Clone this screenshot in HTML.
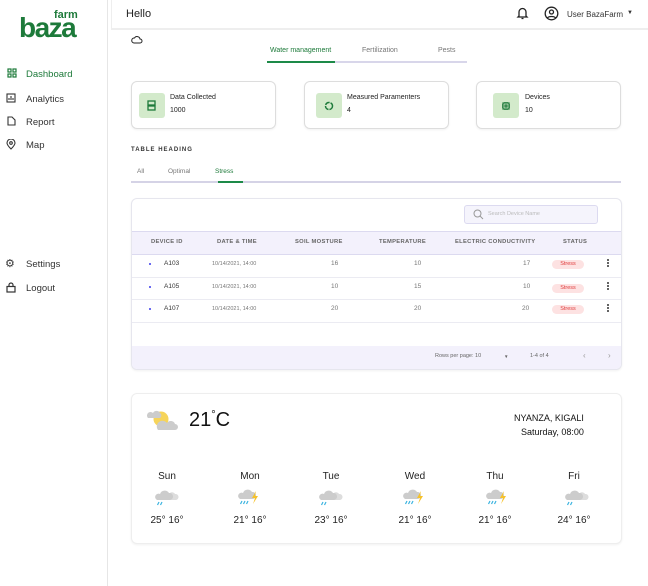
<!DOCTYPE html>
<html><head><meta charset="utf-8"><style>
*{box-sizing:border-box;margin:0;padding:0}
body{width:648px;height:586px;background:#fff;font-family:"Liberation Sans",sans-serif;position:relative;overflow:hidden;color:#222}
.a{position:absolute;white-space:nowrap}
.side{left:0;top:0;width:108px;height:586px;border-right:1px solid #e6e6e6}
.nav{font-size:9.5px;color:#333}
.card{border:1px solid #ddd;border-radius:6px;background:#fff;box-shadow:0 1px 2px rgba(0,0,0,.06)}
.ib{background:#d3eacb;border-radius:3px}
.t7{font-size:7px;color:#222}
.th{font-size:5.8px;color:#666;font-weight:bold;letter-spacing:.3px}
.td{font-size:6.5px;color:#777}
.pill{background:#fde2e2;color:#e03c3c;font-size:5.5px;border-radius:5px;width:32px;height:9px;line-height:9px;text-align:center}
.kb{width:2px;height:2px;background:#333;border-radius:1px;left:607px}
.day{font-size:10px;color:#222;text-align:center;width:60px}
</style></head><body>
<div class="a side"></div>
<div class="a" style="left:19px;top:14px;font-size:28px;font-weight:bold;color:#1d7a3a;letter-spacing:-1.5px;line-height:28px">baza</div>
<div class="a" style="left:53px;top:10px;font-size:11px;font-weight:bold;color:#1d7a3a;line-height:11px;background:#fff;padding:0 1px">farm</div>
<svg class="a" style="left:7px;top:68px" width="10" height="10" viewBox="0 0 10 10" fill="none" stroke="#1d7a3a" stroke-width="1.2"><rect x="1" y="1" width="3" height="3"/><rect x="6" y="1" width="3" height="3"/><rect x="1" y="6" width="3" height="3"/><rect x="6" y="6" width="3" height="3"/></svg>
<div class="a nav" style="left:26px;top:69px;color:#1d7a3a">Dashboard</div>
<svg class="a" style="left:6px;top:93px" width="10" height="10" fill="none" stroke="#333" stroke-width="1.1"><rect x="1" y="1" width="8" height="8"/><path d="M3 7V5M5 7V3M7 7V5"/></svg>
<div class="a nav" style="left:26px;top:94px">Analytics</div>
<svg class="a" style="left:6px;top:116px" width="10" height="10" fill="none" stroke="#333" stroke-width="1.1"><path d="M2 1h4l3 3v5H2z"/></svg>
<div class="a nav" style="left:26px;top:117px">Report</div>
<svg class="a" style="left:6px;top:139px" width="10" height="11" fill="none" stroke="#333" stroke-width="1.1"><path d="M5 10C2 7 1 5 1 4a4 4 0 0 1 8 0c0 1-1 3-4 6z"/><circle cx="5" cy="4" r="1.3"/></svg>
<div class="a nav" style="left:26px;top:140px">Map</div>
<div class="a" style="left:5px;top:257px;font-size:11px;color:#333">⚙</div>
<div class="a nav" style="left:26px;top:259px">Settings</div>
<svg class="a" style="left:6px;top:282px" width="10" height="11" fill="none" stroke="#333" stroke-width="1.2"><rect x="1" y="4.5" width="8" height="5.5"/><path d="M3 4.5V3a2 2 0 0 1 4 0v1.5"/></svg>
<div class="a nav" style="left:26px;top:283px">Logout</div>

<div class="a" style="left:111px;top:0;width:537px;height:30px;border-bottom:2px solid #eee;border-left:1px solid #eee"></div>
<div class="a" style="left:126px;top:8px;font-size:11px;color:#222">Hello</div>
<svg class="a" style="left:516px;top:6px" width="13" height="14" fill="none" stroke="#222" stroke-width="1.3"><path d="M3 10V6a3.5 3.5 0 0 1 7 0v4l1 1H2zM5.5 12.5h2"/></svg>
<svg class="a" style="left:544px;top:6px" width="15" height="15" fill="none" stroke="#222" stroke-width="1.3"><circle cx="7.5" cy="7.5" r="6.3"/><circle cx="7.5" cy="6" r="2"/><path d="M3.5 12c1-2 7-2 8 0"/></svg>
<div class="a" style="left:567px;top:10px;font-size:8px;color:#333">User BazaFarm</div>
<div class="a" style="left:627px;top:10px;font-size:6px;color:#333">▼</div>
<svg class="a" style="left:131px;top:35px" width="12" height="9" fill="none" stroke="#222" stroke-width="1"><path d="M3 8h6a2 2 0 0 0 0-4 3 3 0 0 0-5.5-1A2.5 2.5 0 0 0 3 8z"/></svg>

<div class="a" style="left:267px;top:61px;width:200px;height:2px;background:#d8d6ea"></div>
<div class="a" style="left:267px;top:61px;width:68px;height:2px;background:#1d8a48"></div>
<div class="a" style="left:270px;top:47px;font-size:7px;color:#1d7a3a">Water management</div>
<div class="a" style="left:362px;top:47px;font-size:7px;color:#777">Fertilization</div>
<div class="a" style="left:438px;top:47px;font-size:7px;color:#777">Pests</div>

<div class="a card" style="left:131px;top:81px;width:145px;height:48px"></div>
<div class="a ib" style="left:139px;top:93px;width:26px;height:25px"></div>
<svg class="a" style="left:147px;top:100px" width="10" height="11" fill="none" stroke="#1d7a3a" stroke-width="1.3"><rect x="1" y="1" width="7" height="4"/><rect x="1" y="6" width="7" height="4"/></svg>
<div class="a t7" style="left:170px;top:94px">Data Collected</div>
<div class="a t7" style="left:170px;top:107px">1000</div>
<div class="a card" style="left:304px;top:81px;width:145px;height:48px"></div>
<div class="a ib" style="left:316px;top:93px;width:26px;height:25px"></div>
<svg class="a" style="left:324px;top:101px" width="10" height="10" fill="none" stroke="#1d7a3a" stroke-width="1.5"><circle cx="5" cy="5" r="3.5" stroke-dasharray="5 1"/></svg>
<div class="a t7" style="left:347px;top:94px">Measured Paramenters</div>
<div class="a t7" style="left:347px;top:107px">4</div>
<div class="a card" style="left:476px;top:81px;width:145px;height:48px"></div>
<div class="a ib" style="left:493px;top:93px;width:26px;height:25px"></div>
<svg class="a" style="left:501px;top:101px" width="10" height="10" fill="none" stroke="#1d7a3a" stroke-width="1.2"><rect x="2" y="2" width="6" height="6"/><rect x="4" y="4" width="2" height="2"/><path d="M1 4h1M1 6h1M8 4h1M8 6h1M4 1v1M6 1v1M4 8v1M6 8v1"/></svg>
<div class="a t7" style="left:525px;top:94px">Devices</div>
<div class="a t7" style="left:525px;top:107px">10</div>

<div class="a" style="left:131px;top:147px;font-size:6px;font-weight:bold;letter-spacing:1px;color:#333">TABLE HEADING</div>
<div class="a" style="left:137px;top:168px;font-size:6.5px;color:#777">All</div>
<div class="a" style="left:168px;top:168px;font-size:6.5px;color:#777">Optimal</div>
<div class="a" style="left:215px;top:168px;font-size:6.5px;color:#1d7a3a">Stress</div>
<div class="a" style="left:131px;top:181px;width:490px;height:2px;background:#d5d3e6"></div>
<div class="a" style="left:218px;top:181px;width:25px;height:2px;background:#1d8a48"></div>

<div class="a card" style="left:131px;top:198px;width:491px;height:172px;border-color:#e6e6ee;overflow:hidden">
<div class="a" style="left:0;top:32px;width:491px;height:24px;background:#f3f1fc;border-top:1px solid #dcdaf0;border-bottom:1px solid #dcdaf0"></div>
<div class="a" style="left:0;top:78px;width:491px;height:1px;background:#ebebf2"></div>
<div class="a" style="left:0;top:100px;width:491px;height:1px;background:#ebebf2"></div>
<div class="a" style="left:0;top:123px;width:491px;height:1px;background:#ebebf2"></div>
<div class="a" style="left:0;top:147px;width:491px;height:25px;background:#f3f1fc"></div>
</div>
<div class="a" style="left:464px;top:205px;width:134px;height:19px;border:1px solid #dcdaf0;border-radius:3px;background:#f5f4fc"></div>
<svg class="a" style="left:473px;top:209px" width="11" height="11" fill="none" stroke="#999" stroke-width="1"><circle cx="4.5" cy="4.5" r="3.5"/><path d="M7 7l3 3"/></svg>
<div class="a" style="left:488px;top:211px;font-size:5.5px;color:#bbb">Search Device Name</div>
<div class="a th" style="left:151px;top:239px">DEVICE ID</div>
<div class="a th" style="left:217px;top:239px">DATE &amp; TIME</div>
<div class="a th" style="left:295px;top:239px">SOIL MOSTURE</div>
<div class="a th" style="left:379px;top:239px">TEMPERATURE</div>
<div class="a th" style="left:455px;top:239px">ELECTRIC CONDUCTIVITY</div>
<div class="a th" style="left:563px;top:239px">STATUS</div>

<div class="a" style="left:149px;top:263px;width:2px;height:2px;background:#6b6bf0"></div>
<div class="a" style="left:164px;top:260px;font-size:6.5px;color:#333">A103</div>
<div class="a td" style="left:212px;top:261px;font-size:5.5px">10/14/2021, 14:00</div>
<div class="a td" style="left:331px;top:260px">16</div>
<div class="a td" style="left:414px;top:260px">10</div>
<div class="a td" style="left:523px;top:260px">17</div>
<div class="a pill" style="left:552px;top:260px">Stress</div>
<div class="a kb" style="top:259px;box-shadow:0 3px 0 #333,0 6px 0 #333"></div>

<div class="a" style="left:149px;top:286px;width:2px;height:2px;background:#6b6bf0"></div>
<div class="a" style="left:164px;top:283px;font-size:6.5px;color:#333">A105</div>
<div class="a td" style="left:212px;top:284px;font-size:5.5px">10/14/2021, 14:00</div>
<div class="a td" style="left:331px;top:283px">10</div>
<div class="a td" style="left:414px;top:283px">15</div>
<div class="a td" style="left:523px;top:283px">10</div>
<div class="a pill" style="left:552px;top:284px">Stress</div>
<div class="a kb" style="top:282px;box-shadow:0 3px 0 #333,0 6px 0 #333"></div>

<div class="a" style="left:149px;top:308px;width:2px;height:2px;background:#6b6bf0"></div>
<div class="a" style="left:164px;top:305px;font-size:6.5px;color:#333">A107</div>
<div class="a td" style="left:212px;top:306px;font-size:5.5px">10/14/2021, 14:00</div>
<div class="a td" style="left:331px;top:305px">20</div>
<div class="a td" style="left:414px;top:305px">20</div>
<div class="a td" style="left:522px;top:305px">20</div>
<div class="a pill" style="left:552px;top:305px">Stress</div>
<div class="a kb" style="top:304px;box-shadow:0 3px 0 #333,0 6px 0 #333"></div>

<div class="a" style="left:435px;top:353px;font-size:5.5px;color:#666">Rows per page: 10</div>
<div class="a" style="left:504px;top:354px;font-size:4.5px;color:#666">▼</div>
<div class="a" style="left:530px;top:353px;font-size:5.5px;color:#666">1-4 of 4</div>
<div class="a" style="left:583px;top:351px;font-size:8px;color:#999">‹</div>
<div class="a" style="left:608px;top:351px;font-size:8px;color:#999">›</div>

<div class="a card" style="left:131px;top:393px;width:491px;height:151px;border-color:#eee"></div>
<svg class="a" style="left:146px;top:408px" width="32" height="24"><circle cx="15" cy="11" r="7.5" fill="#f6d45a"/><path d="M2 10h12a3 3 0 0 0 0-5 4 4 0 0 0-7 0 3 3 0 0 0-5 5z" fill="#ccc"/><path d="M12 22h17a3 3 0 0 0 0-6 4.5 4.5 0 0 0-8-1 3.5 3.5 0 0 0-9 7z" fill="#ccc"/></svg>
<div class="a" style="left:189px;top:409px;font-size:20px;color:#111">21<span style="font-size:11px;vertical-align:8px">°</span>C</div>
<div class="a" style="left:514px;top:413px;font-size:9px;color:#111">NYANZA, KIGALI</div>
<div class="a" style="left:521px;top:427px;font-size:9px;color:#111">Saturday, 08:00</div>

<div class="a day" style="left:137px;top:471px">Sun</div>
<div class="a day" style="left:220px;top:471px">Mon</div>
<div class="a day" style="left:301px;top:471px">Tue</div>
<div class="a day" style="left:385px;top:471px">Wed</div>
<div class="a day" style="left:465px;top:471px">Thu</div>
<div class="a day" style="left:544px;top:471px">Fri</div>

<svg class="a" style="left:155px;top:488px" width="24" height="18"><path d="M12 12h9a3 3 0 0 0-1-6 3.5 3.5 0 0 0-6 0z" fill="#ddd"/><path d="M2 12h13a3.5 3.5 0 0 0-1-7 5 5 0 0 0-9 1 3 3 0 0 0-3 6z" fill="#ccc"/><path d="M4 14l-1.5 3M7 14l-1.5 3" stroke="#3bb4e0" stroke-width="1.2"/></svg>
<svg class="a" style="left:238px;top:488px" width="24" height="18"><path d="M2 11h13a3.5 3.5 0 0 0-1-7 5 5 0 0 0-9 1 3 3 0 0 0-3 6z" fill="#ccc"/><path d="M18 3l-4 7h3l-2 6 5-8h-3z" fill="#f6c22a"/><path d="M4 13l-1.5 3M7 13l-1.5 3M10 13l-1.5 3" stroke="#3bb4e0" stroke-width="1.2"/></svg>
<svg class="a" style="left:319px;top:488px" width="24" height="18"><path d="M12 12h9a3 3 0 0 0-1-6 3.5 3.5 0 0 0-6 0z" fill="#ddd"/><path d="M2 12h13a3.5 3.5 0 0 0-1-7 5 5 0 0 0-9 1 3 3 0 0 0-3 6z" fill="#ccc"/><path d="M4 14l-1.5 3M7 14l-1.5 3" stroke="#3bb4e0" stroke-width="1.2"/></svg>
<svg class="a" style="left:403px;top:488px" width="24" height="18"><path d="M2 11h13a3.5 3.5 0 0 0-1-7 5 5 0 0 0-9 1 3 3 0 0 0-3 6z" fill="#ccc"/><path d="M18 3l-4 7h3l-2 6 5-8h-3z" fill="#f6c22a"/><path d="M4 13l-1.5 3M7 13l-1.5 3M10 13l-1.5 3" stroke="#3bb4e0" stroke-width="1.2"/></svg>
<svg class="a" style="left:486px;top:488px" width="24" height="18"><path d="M2 11h13a3.5 3.5 0 0 0-1-7 5 5 0 0 0-9 1 3 3 0 0 0-3 6z" fill="#ccc"/><path d="M18 3l-4 7h3l-2 6 5-8h-3z" fill="#f6c22a"/><path d="M4 13l-1.5 3M7 13l-1.5 3M10 13l-1.5 3" stroke="#3bb4e0" stroke-width="1.2"/></svg>
<svg class="a" style="left:565px;top:488px" width="24" height="18"><path d="M12 12h9a3 3 0 0 0-1-6 3.5 3.5 0 0 0-6 0z" fill="#ddd"/><path d="M2 12h13a3.5 3.5 0 0 0-1-7 5 5 0 0 0-9 1 3 3 0 0 0-3 6z" fill="#ccc"/><path d="M4 14l-1.5 3M7 14l-1.5 3" stroke="#3bb4e0" stroke-width="1.2"/></svg>

<div class="a day" style="left:137px;top:515px">25° 16°</div>
<div class="a day" style="left:220px;top:515px">21° 16°</div>
<div class="a day" style="left:301px;top:515px">23° 16°</div>
<div class="a day" style="left:385px;top:515px">21° 16°</div>
<div class="a day" style="left:465px;top:515px">21° 16°</div>
<div class="a day" style="left:544px;top:515px">24° 16°</div>
</body></html>
